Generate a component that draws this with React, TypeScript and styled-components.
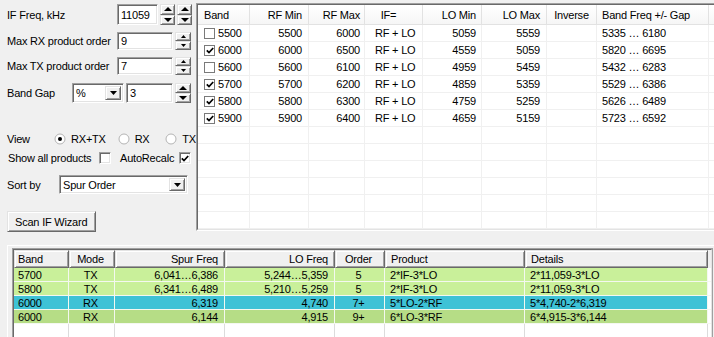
import React from 'react';
import styled, { createGlobalStyle, css } from 'styled-components';

const GlobalStyle = createGlobalStyle`
  html, body {
    margin: 0;
    padding: 0;
    background: #f0f0f0;
  }
  body {
    font-family: 'Liberation Sans', Arial, sans-serif;
    font-size: 11px;
    letter-spacing: -0.2px;
    color: #000;
  }
  * { box-sizing: border-box; }
`;

// classic 3D edges
const sunken = css`
  background: #fff;
  border-style: solid;
  border-width: 1px;
  border-color: #a0a0a0 #fff #fff #a0a0a0;
  box-shadow: inset 1px 1px 0 #696969, inset -1px -1px 0 #e3e3e3;
`;

const raised = css`
  background: #f0f0f0;
  border-style: solid;
  border-width: 1px;
  border-color: #e3e3e3 #696969 #696969 #e3e3e3;
  box-shadow: inset 1px 1px 0 #fff, inset -1px -1px 0 #a0a0a0;
`;

const Window = styled.div`
  width: 714px;
  height: 337px;
  overflow: hidden;
  background: #f0f0f0;
  display: flex;
  flex-direction: column;
`;

const TopArea = styled.div`
  display: flex;
  height: 245px;
  flex-shrink: 0;
  padding-top: 3px;
`;

const LeftPanel = styled.div`
  width: 196px;
  flex-shrink: 0;
  padding-left: 7px;
  display: flex;
  flex-direction: column;
`;

const Row = styled.div<{ $h: number; $mt: number }>`
  display: flex;
  align-items: center;
  height: ${(p) => p.$h}px;
  margin-top: ${(p) => p.$mt}px;
`;

const Label = styled.span<{ $w?: number; $ml?: number }>`
  width: ${(p) => (p.$w ? `${p.$w}px` : 'auto')};
  margin-left: ${(p) => p.$ml ?? 0}px;
  flex-shrink: 0;
  white-space: nowrap;
`;

const Edit = styled.div<{ $w: number }>`
  ${sunken};
  width: ${(p) => p.$w}px;
  height: 100%;
  display: flex;
  align-items: center;
  padding-left: 3px;
  margin-right: 2px;
`;

const SpinBox = styled.div<{ $w: number }>`
  width: ${(p) => p.$w}px;
  height: 100%;
  display: flex;
  flex-direction: column;
  margin-right: 2px;
`;

const SpinHalf = styled.div`
  ${raised};
  flex: 1;
  display: flex;
  align-items: center;
  justify-content: center;
`;

const TriSvg = styled.svg`
  display: block;
`;

const Tri = ({ w, h, down }: { w: number; h: number; down?: boolean }) => (
  <TriSvg width={w} height={h} viewBox={`0 0 ${w} ${h}`}>
    <polygon points={down ? `0,0 ${w},0 ${w / 2},${h}` : `0,${h} ${w},${h} ${w / 2},0`} fill="#000" />
  </TriSvg>
);

const Spin = ({ bold, w = 15 }: { bold?: boolean; w?: number }) => (
  <SpinBox $w={w}>
    <SpinHalf>{bold ? <Tri w={8} h={4} /> : <Tri w={5} h={3} />}</SpinHalf>
    <SpinHalf>{bold ? <Tri w={8} h={4} down /> : <Tri w={5} h={3} down />}</SpinHalf>
  </SpinBox>
);

const SelectBox = styled.div<{ $w: number }>`
  ${sunken};
  width: ${(p) => p.$w}px;
  height: 100%;
  display: flex;
  align-items: center;
  justify-content: space-between;
  padding: 2px 2px 2px 3px;
  margin-right: 2px;
`;

const DropButton = styled.div`
  ${raised};
  width: 16px;
  height: 100%;
  display: flex;
  align-items: center;
  justify-content: center;
`;

const Select = ({ w, value }: { w: number; value: string }) => (
  <SelectBox $w={w}>
    <span>{value}</span>
    <DropButton>
      <Tri w={7} h={4} down />
    </DropButton>
  </SelectBox>
);

const RadioItem = styled.div<{ $w?: number }>`
  display: flex;
  align-items: center;
  gap: 5px;
  width: ${(p) => (p.$w ? `${p.$w}px` : 'auto')};
`;

const Radio = ({ checked }: { checked?: boolean }) => (
  <TriSvg width={12} height={12} viewBox="0 0 12 12">
    <circle cx="6" cy="6" r="5" fill="#fff" stroke="#b4b4b4" strokeWidth="1" />
    {checked && <circle cx="6" cy="6" r="2" fill="#000" />}
  </TriSvg>
);

const CheckMark = () => (
  <TriSvg width={8} height={7} viewBox="0 0 8 7">
    <path d="M0.8 3.3 L3 5.6 L7.2 1" stroke="#000" strokeWidth="1.7" fill="none" />
  </TriSvg>
);

const SideCheck = styled.div`
  ${sunken};
  width: 12px;
  height: 12px;
  flex-shrink: 0;
  display: flex;
  align-items: center;
  justify-content: center;
`;

const Button = styled.div`
  ${raised};
  width: 89px;
  height: 21px;
  display: flex;
  align-items: center;
  padding-left: 7px;
`;

// ---------- top band table ----------
const topCols = [52, 59, 56, 58, 59, 65, 50, 112];

const TableOuter = styled.div`
  flex: 1;
  height: 228px;
  margin-right: 2px;
  border-style: solid;
  border-width: 1px;
  border-color: #a0a0a0 #fff #fff #a0a0a0;
`;

const TableInner = styled.div`
  height: 100%;
  border-style: solid;
  border-width: 1px;
  border-color: #696969 #e3e3e3 #e3e3e3 #696969;
  background: #fff;
  overflow: hidden;
`;

const TopGrid = styled.div`
  display: grid;
  grid-template-columns: ${topCols.map((c) => `${c}px`).join(' ')} 1fr;
  grid-template-rows: 20px;
  grid-auto-rows: 17px;
`;

type Align = 'left' | 'right' | 'center';
const justify = (a: Align) => (a === 'left' ? 'flex-start' : a === 'right' ? 'flex-end' : 'center');

const TopHead = styled.div<{ $align: Align; $pl?: number; $pr?: number }>`
  display: flex;
  align-items: center;
  justify-content: ${(p) => justify(p.$align)};
  padding: 0 ${(p) => p.$pr ?? 5}px 0 ${(p) => p.$pl ?? 6}px;
  background: linear-gradient(#ffffff, #f6f6f6);
  border-right: 1px solid #e2e2e2;
  border-bottom: 1px solid #e2e2e2;
  white-space: nowrap;
`;

const TopCell = styled.div<{ $align: Align; $pl?: number; $pr?: number }>`
  display: flex;
  align-items: center;
  justify-content: ${(p) => justify(p.$align)};
  padding: 0 ${(p) => p.$pr ?? 5}px 0 ${(p) => p.$pl ?? 6}px;
  border-right: 1px solid #f0f0f0;
  border-bottom: 1px solid #f0f0f0;
  white-space: nowrap;
  gap: 3px;
`;

const GridCheck = styled.div`
  width: 11px;
  height: 11px;
  border: 1px solid #7a7a7a;
  background: #fff;
  display: flex;
  align-items: center;
  justify-content: center;
`;

const topHeaders: { t: string; a: Align; pr?: number; pl?: number }[] = [
  { t: 'Band', a: 'left' },
  { t: 'RF Min', a: 'right', pr: 6 },
  { t: 'RF Max', a: 'right', pr: 4 },
  { t: 'IF=', a: 'center', pr: 10, pl: 0 },
  { t: 'LO Min', a: 'right', pr: 5 },
  { t: 'LO Max', a: 'right', pr: 6 },
  { t: 'Inverse', a: 'center', pl: 2, pr: 2 },
  { t: 'Band Freq +/- Gap', a: 'left', pl: 5 },
];

const bands = [
  { on: false, band: '5500', rfMin: '5500', rfMax: '6000', loMin: '5059', loMax: '5559', range: '5335 … 6180' },
  { on: true, band: '6000', rfMin: '6000', rfMax: '6500', loMin: '4559', loMax: '5059', range: '5820 … 6695' },
  { on: false, band: '5600', rfMin: '5600', rfMax: '6100', loMin: '4959', loMax: '5459', range: '5432 … 6283' },
  { on: true, band: '5700', rfMin: '5700', rfMax: '6200', loMin: '4859', loMax: '5359', range: '5529 … 6386' },
  { on: true, band: '5800', rfMin: '5800', rfMax: '6300', loMin: '4759', loMax: '5259', range: '5626 … 6489' },
  { on: true, band: '5900', rfMin: '5900', rfMax: '6400', loMin: '4659', loMax: '5159', range: '5723 … 6592' },
];

// ---------- bottom result table ----------
const bottomCols = [55, 46, 110, 110, 50, 140, 183];

const BottomPanel = styled.div`
  flex: 1;
  min-height: 0;
  margin-left: 7px;
  border-top: 1px solid #fff;
  border-left: 1px solid #fff;
  padding: 2px 1px 0 4px;
  display: flex;
`;

const ResultOuter = styled.div`
  flex: 1;
  border-style: solid;
  border-width: 1px 1px 0 1px;
  border-color: #a0a0a0;
  overflow: hidden;
`;

const ResultInner = styled.div`
  height: 100%;
  border-style: solid;
  border-width: 1px 1px 0 1px;
  border-color: #696969 #e3e3e3 #696969 #696969;
  background: #fff;
  overflow: hidden;
`;

const ResultGrid = styled.div`
  display: grid;
  grid-template-columns: ${bottomCols.map((c) => `${c}px`).join(' ')} 1fr;
  grid-template-rows: 18px;
  grid-auto-rows: 14px;
`;

const ResHead = styled.div<{ $align: Align; $pl?: number; $pr?: number }>`
  ${raised};
  display: flex;
  align-items: center;
  justify-content: ${(p) => justify(p.$align)};
  padding: 0 ${(p) => p.$pr ?? 6}px 0 ${(p) => p.$pl ?? 3}px;
  white-space: nowrap;
`;

const HeadFill = styled.div`
  background: #f0f0f0;
`;

const ResCell = styled.div<{ $align: Align; $bg: string; $pl?: number; $pr?: number }>`
  display: flex;
  align-items: center;
  justify-content: ${(p) => justify(p.$align)};
  padding: 0 ${(p) => p.$pr ?? 6}px 0 ${(p) => p.$pl ?? 4}px;
  background: ${(p) => p.$bg};
  border-right: 1px solid #f4f8f0;
  border-bottom: 1px solid #f4f8f0;
  white-space: nowrap;
`;

const FillCell = styled.div`
  height: 40px;
  border-right: 1px solid #dcdcdc;
`;

const resHeaders: { t: string; a: Align; pl?: number; pr?: number }[] = [
  { t: 'Band', a: 'left' },
  { t: 'Mode', a: 'center' },
  { t: 'Spur Freq', a: 'right' },
  { t: 'LO Freq', a: 'right' },
  { t: 'Order', a: 'center' },
  { t: 'Product', a: 'left', pl: 5 },
  { t: 'Details', a: 'left', pl: 5 },
];

const resAligns: Align[] = ['left', 'center', 'right', 'right', 'center', 'left', 'left'];

const spurs = [
  { bg: '#c9f09a', v: ['5700', 'TX', '6,041…6,386', '5,244…5,359', '5', '2*IF-3*LO', '2*11,059-3*LO'] },
  { bg: '#c9f09a', v: ['5800', 'TX', '6,341…6,489', '5,210…5,259', '5', '2*IF-3*LO', '2*11,059-3*LO'] },
  { bg: '#3ec2d6', v: ['6000', 'RX', '6,319', '4,740', '7+', '5*LO-2*RF', '5*4,740-2*6,319'] },
  { bg: '#b6dd86', v: ['6000', 'RX', '6,144', '4,915', '9+', '6*LO-3*RF', '6*4,915-3*6,144'] },
];

export default function App() {
  return (
    <>
      <GlobalStyle />
      <Window>
        <TopArea>
          <LeftPanel>
            <Row $h={21} $mt={1}>
              <Label $w={110}>IF Freq, kHz</Label>
              <Edit $w={41}>11059</Edit>
              <Spin bold />
              <Spin bold />
            </Row>
            <Row $h={18} $mt={7}>
              <Label $w={110}>Max RX product order</Label>
              <Edit $w={56}>9</Edit>
              <Spin w={16} />
            </Row>
            <Row $h={18} $mt={7}>
              <Label $w={110}>Max TX product order</Label>
              <Edit $w={56}>7</Edit>
              <Spin w={16} />
            </Row>
            <Row $h={20} $mt={8}>
              <Label $w={65}>Band Gap</Label>
              <Select w={52} value="%" />
              <Edit $w={47}>3</Edit>
              <Spin bold w={16} />
            </Row>
            <Row $h={16} $mt={28}>
              <Label $w={47}>View</Label>
              <RadioItem $w={64}>
                <Radio checked />
                <span>RX+TX</span>
              </RadioItem>
              <RadioItem $w={48}>
                <Radio />
                <span>RX</span>
              </RadioItem>
              <RadioItem>
                <Radio />
                <span>TX</span>
              </RadioItem>
            </Row>
            <Row $h={16} $mt={3}>
              <Label $w={91} $ml={1}>Show all products</Label>
              <SideCheck />
              <Label $w={59} $ml={9}>AutoRecalc</Label>
              <SideCheck>
                <CheckMark />
              </SideCheck>
            </Row>
            <Row $h={19} $mt={9}>
              <Label $w={52}>Sort by</Label>
              <Select w={129} value="Spur Order" />
            </Row>
            <Row $h={21} $mt={17}>
              <Button>Scan IF Wizard</Button>
            </Row>
          </LeftPanel>

          <TableOuter>
            <TableInner>
              <TopGrid>
                {topHeaders.map((h) => (
                  <TopHead key={h.t} $align={h.a} $pl={h.pl} $pr={h.pr}>
                    {h.t}
                  </TopHead>
                ))}
                <TopHead $align="left" />
                {bands.map((b) => (
                  <React.Fragment key={b.band}>
                    <TopCell $align="left">
                      <GridCheck>{b.on && <CheckMark />}</GridCheck>
                      {b.band}
                    </TopCell>
                    <TopCell $align="right" $pr={6}>{b.rfMin}</TopCell>
                    <TopCell $align="right" $pr={4}>{b.rfMax}</TopCell>
                    <TopCell $align="left" $pl={10}>RF + LO</TopCell>
                    <TopCell $align="right" $pr={5}>{b.loMin}</TopCell>
                    <TopCell $align="right" $pr={6}>{b.loMax}</TopCell>
                    <TopCell $align="center" />
                    <TopCell $align="left" $pl={5}>{b.range}</TopCell>
                    <TopCell $align="left" />
                  </React.Fragment>
                ))}
                {Array.from({ length: 7 * 9 }).map((_, i) => (
                  <TopCell key={`e${i}`} $align="left" />
                ))}
              </TopGrid>
            </TableInner>
          </TableOuter>
        </TopArea>

        <BottomPanel>
          <ResultOuter>
            <ResultInner>
              <ResultGrid>
                {resHeaders.map((h) => (
                  <ResHead key={h.t} $align={h.a} $pl={h.pl} $pr={h.pr}>
                    {h.t}
                  </ResHead>
                ))}
                <HeadFill />
                {spurs.map((s, r) => (
                  <React.Fragment key={r}>
                    {s.v.map((v, c) => (
                      <ResCell key={c} $align={resAligns[c]} $bg={s.bg} $pl={c >= 5 ? 5 : 4}>
                        {v}
                      </ResCell>
                    ))}
                    <ResCell $align="left" $bg="#fff" />
                  </React.Fragment>
                ))}
                {Array.from({ length: 8 }).map((_, i) => (
                  <FillCell key={`f${i}`} />
                ))}
              </ResultGrid>
            </ResultInner>
          </ResultOuter>
        </BottomPanel>
      </Window>
    </>
  );
}
